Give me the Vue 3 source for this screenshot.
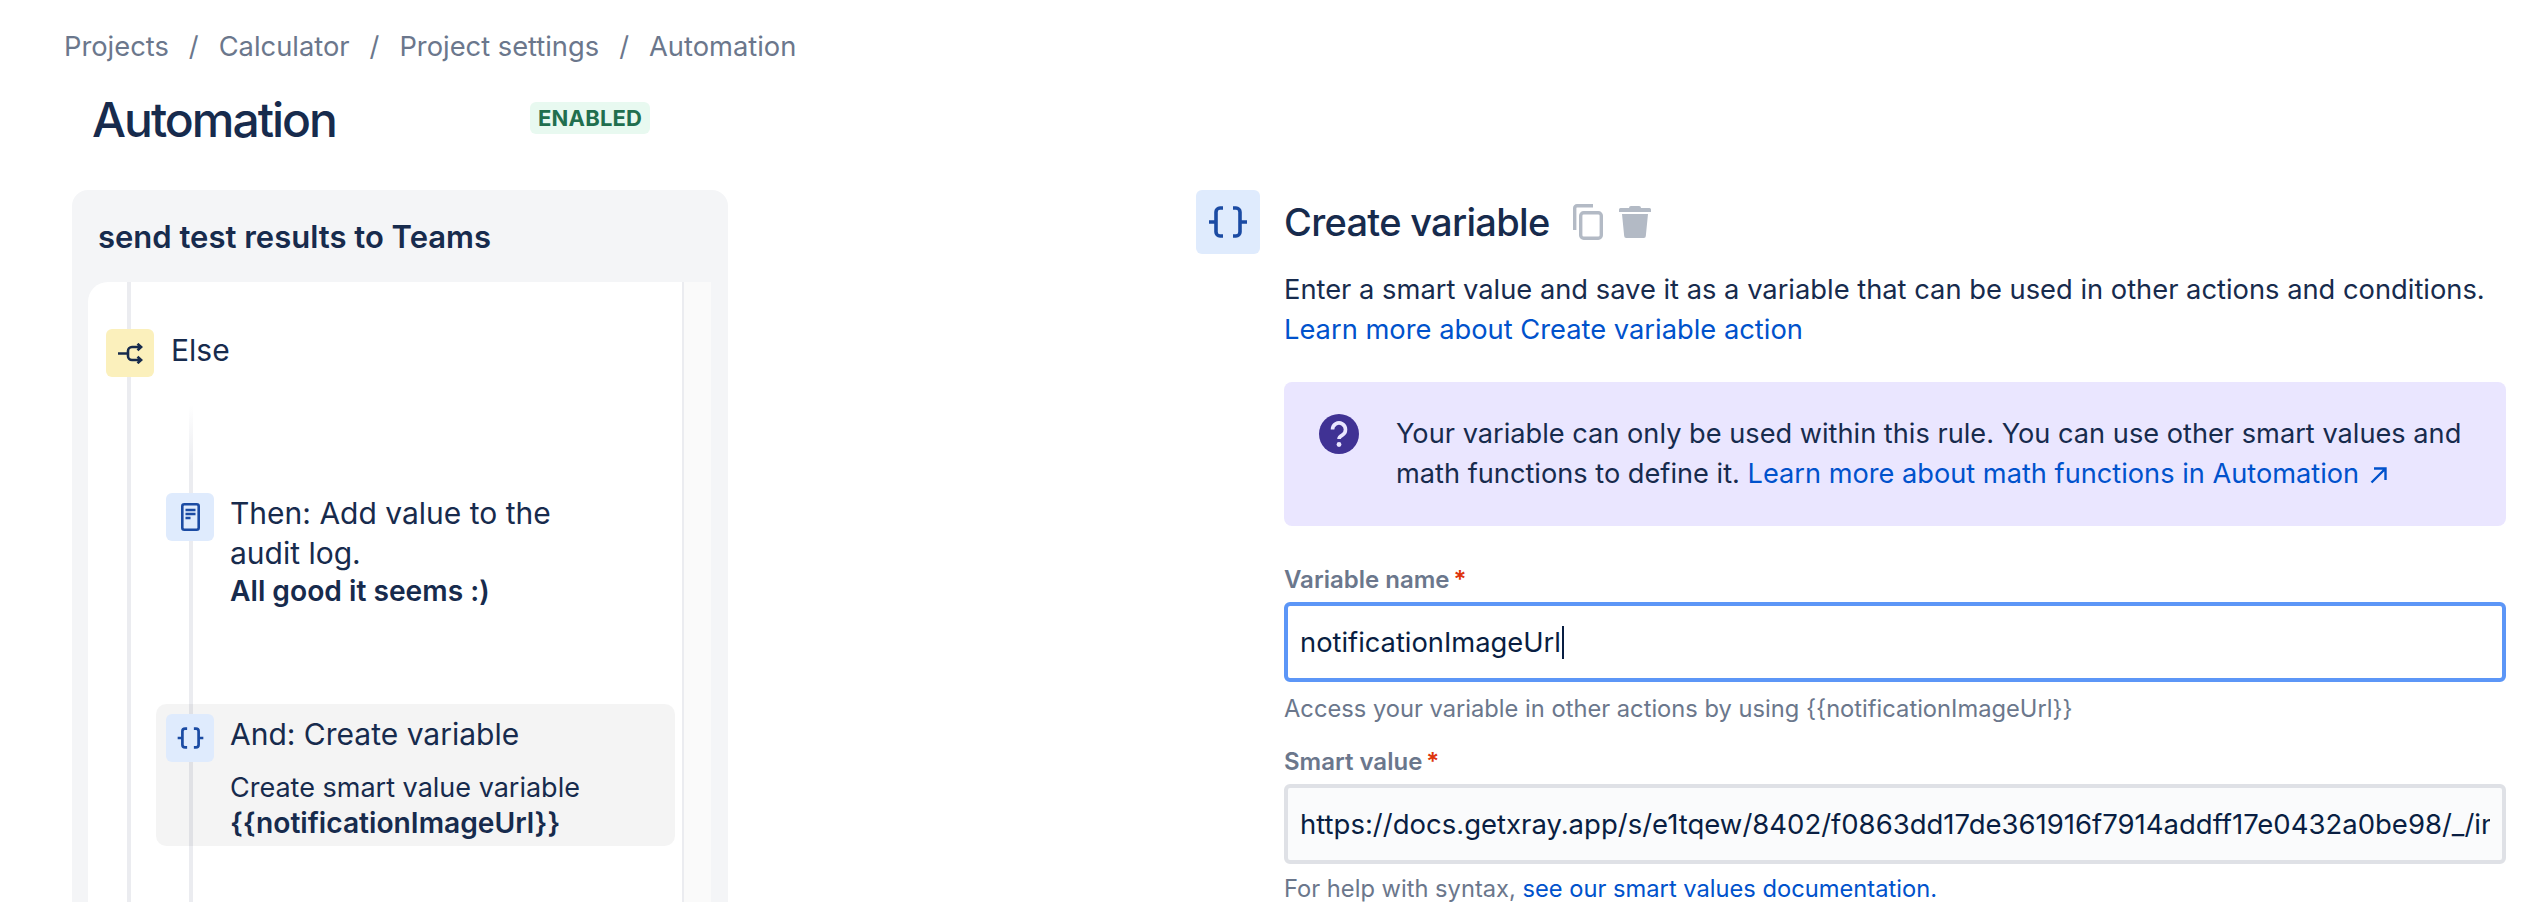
<script setup>
const crumbs = ['Projects', 'Calculator', 'Project settings', 'Automation']
</script>

<template>
  <div class="page">
    <div class="left">
      <nav class="crumbs">
        <template v-for="(c, i) in crumbs" :key="c">
          <span v-if="i > 0" class="sep">/</span>
          <span>{{ c }}</span>
        </template>
      </nav>
      <div class="heading">
        <h1>Automation</h1>
        <span class="lozenge">ENABLED</span>
      </div>
      <div class="rule-panel">
        <h2>send test results to Teams</h2>
        <div class="rule-body">
          <div class="flow">
            <i class="line line-outer"></i>
            <i class="line line-inner"></i>
            <div class="step step-else">
              <span class="tile tile-yellow">
                <svg width="25" height="21" viewBox="0 0 25 21" fill="none" stroke="#172b4d" stroke-width="2.6">
                  <path d="M0 10.500h10M23 4h-9a4 4 0 0 0-4 4v5a4 4 0 0 0 4 4h9" />
                  <path d="M19.500 0.800l3.600 3.200-3.600 3.200M19.500 13.800l3.600 3.200-3.600 3.200" />
                </svg>
              </span>
              <span class="step-title">Else</span>
            </div>
            <div class="step step-then">
              <span class="tile tile-blue">
                <svg width="19" height="28" viewBox="0 0 19 28" fill="none">
                  <rect x="1.300" y="1.300" width="16.400" height="25.400" rx="2" stroke="#1b4ba3" stroke-width="2.600" />
                  <path d="M4.500 7h10M4.500 11h10M4.500 15h5" stroke="#1b4ba3" stroke-width="2.400" />
                </svg>
              </span>
              <div class="step-text">
                <div class="step-title">Then: Add value to the<br />audit log.</div>
                <div class="step-bold">All good it seems :)</div>
              </div>
            </div>
            <div class="step step-and">
              <span class="tile tile-blue">
                <svg width="27" height="22" viewBox="0 0 40 32" fill="none" stroke="#1b4ba3" stroke-width="4">
                  <path d="M15 2h-3a4 4 0 0 0-4 4v20a4 4 0 0 0 4 4h3M1 16h7" />
                  <path d="M25 2h3a4 4 0 0 1 4 4v20a4 4 0 0 1-4 4h-3M32 16h7" />
                </svg>
              </span>
              <div class="step-text">
                <div class="step-title">And: Create variable</div>
                <div class="step-sub">Create smart value variable</div>
                <div class="step-bold">&#123;&#123;notificationImageUrl&#125;&#125;</div>
              </div>
            </div>
          </div>
          <div class="scroll-track"></div>
        </div>
      </div>
    </div>

    <div class="right">
      <span class="tile tile-blue tile-large">
        <svg width="40" height="32" viewBox="0 0 40 32" fill="none" stroke="#1b4ba3" stroke-width="3.600">
          <path d="M15 2h-3a4 4 0 0 0-4 4v20a4 4 0 0 0 4 4h3M1 16h7" />
          <path d="M25 2h3a4 4 0 0 1 4 4v20a4 4 0 0 1-4 4h-3M32 16h7" />
        </svg>
      </span>
      <div class="form">
        <div class="form-head">
          <h2>Create variable</h2>
          <svg class="copy" width="30" height="36" viewBox="0 0 30 36" fill="none" stroke="#b3bac5" stroke-width="3.400">
            <path d="M20 1.700H4a2.300 2.300 0 0 0-2.300 2.300v22" />
            <rect x="7.700" y="8.700" width="20.600" height="25.600" rx="3" />
          </svg>
          <svg class="trash" width="32" height="32" viewBox="0 0 32 32" fill="#b3bac5">
            <path d="M12 0h8a2 2 0 0 1 2 2h8.500a1.500 1.500 0 0 1 1.500 1.500V6H0V3.500A1.500 1.500 0 0 1 1.500 2H10a2 2 0 0 1 2-2z" />
            <path d="M3 8h26l-2.200 22a2 2 0 0 1-2 2H7.200a2 2 0 0 1-2-2z" />
          </svg>
        </div>
        <p class="desc">
          Enter a smart value and save it as a variable that can be used in other actions and conditions.<br />
          <a>Learn more about Create variable action</a>
        </p>
        <div class="info">
          <svg width="40" height="40" viewBox="0 0 40 40">
            <circle cx="20" cy="20" r="20" fill="#403294" />
            <path d="M13.500 15.500a6.500 6.500 0 1 1 9.800 5.600c-2.300 1.300-3.300 2-3.300 3.900" fill="none" stroke="#eae6ff" stroke-width="3.600" />
            <circle cx="20" cy="30.500" r="2.400" fill="#eae6ff" />
          </svg>
          <p>
            Your variable can only be used within this rule. You can use other smart values and
            math functions to define it. <a>Learn more about math functions in Automation</a>
            <svg class="external" width="17" height="17" viewBox="0 0 17 17" fill="none" stroke="#0052cc" stroke-width="2.400"><path d="M1.500 15.500L15 2M4 1.500h11.500V13" /></svg>
          </p>
        </div>
        <label class="field-label">Variable name<span class="req">*</span></label>
        <div class="input input-focus">notificationImageUrl<span class="caret"></span></div>
        <div class="help help-first">Access your variable in other actions by using &#123;&#123;notificationImageUrl&#125;&#125;</div>
        <label class="field-label field-second">Smart value<span class="req">*</span></label>
        <div class="input input-url"><span class="clip">https://docs.getxray.app/s/e1tqew/8402/f0863dd17de361916f7914addff17e0432a0be98/_/images/icons/emoticons/check.png</span></div>
        <div class="help help-last">For help with syntax, <a>see our smart values documentation.</a></div>
      </div>
    </div>
  </div>
</template>

<style>
html, body {
  margin: 0;
  background: #fff;
}
</style>

<style scoped>
.page {
  display: flex;
  width: 2522px;
  height: 902px;
  overflow: hidden;
  font-family: Inter, "Liberation Sans", sans-serif;
  color: #172b4d;
  background: #fff;
}

.left {
  width: 1196px;
  flex-shrink: 0;
}

.crumbs {
  display: flex;
  gap: 20px;
  padding: 30px 0 0 64px;
  font-size: 27.3px;
  line-height: 34px;
  color: #6b778c;
}

.heading {
  display: flex;
  align-items: flex-start;
  height: 62px;
  margin: 28px 0 0 92px;
}

h1 {
  margin: 0;
  width: 438px;
  font-size: 48px;
  line-height: 56px;
  font-weight: 500;
  letter-spacing: -2px;
}

.lozenge {
  margin-top: 10px;
  padding: 0 8px;
  height: 32px;
  line-height: 32px;
  border-radius: 6px;
  background: #e8f9f0;
  color: #216e4e;
  font-size: 22px;
  font-weight: 700;
  letter-spacing: 0.2px;
}

.rule-panel {
  margin: 36px 0 0 72px;
  width: 656px;
  height: 760px;
  box-sizing: border-box;
  padding-left: 16px;
  background: #f4f5f7;
  border-radius: 16px;
}

.rule-panel h2 {
  margin: 0;
  padding: 28px 0 0 10px;
  height: 92px;
  box-sizing: border-box;
  font-size: 31px;
  line-height: 38px;
  font-weight: 600;
}

.rule-body {
  display: flex;
  width: 623px;
  height: 640px;
  background: #fff;
  border-top-left-radius: 20px;
  overflow: hidden;
}

.flow {
  position: relative;
  width: 594px;
  flex-shrink: 0;
  border-right: 2px solid #ebecf0;
}

.line {
  position: absolute;
  width: 4px;
  background: #ebecf0;
}

.line-outer {
  left: 39px;
  top: 0;
  bottom: 0;
}

.line-inner {
  left: 101px;
  top: 123px;
  bottom: 0;
  background: linear-gradient(#fff, #ebecf0 60px);
}

.step {
  position: relative;
  display: flex;
}

.step-else {
  padding: 47px 0 0 18px;
  gap: 17px;
}

.step-then {
  margin-top: 116px;
  padding-left: 78px;
  gap: 16px;
}

.step-and {
  margin: 95px 7px 0 68px;
  height: 142px;
  box-sizing: border-box;
  padding: 10px 0 0 10px;
  gap: 16px;
  background: rgba(0, 0, 0, 0.045);
  border-radius: 10px;
}

.tile {
  display: flex;
  align-items: center;
  justify-content: center;
  flex-shrink: 0;
  width: 48px;
  height: 48px;
  border-radius: 6px;
}

.tile-yellow {
  background: #fbf0bc;
}

.tile-blue {
  background: #dfebfd;
}

.tile-large {
  width: 64px;
  height: 64px;
}

.step-title {
  font-size: 30px;
  line-height: 40px;
}

.step-else .step-title {
  line-height: 42px;
}

.step-sub {
  margin-top: 17px;
  font-size: 27px;
  line-height: 34px;
}

.step-bold {
  font-size: 28.2px;
  line-height: 36px;
  font-weight: 600;
}

.scroll-track {
  width: 27px;
  background: #fafafa;
}

.right {
  display: flex;
  align-items: flex-start;
  gap: 25px;
  padding-top: 190px;
}

.form {
  width: 1222px;
  flex-shrink: 0;
  margin-left: -1px;
}

.form-head {
  display: flex;
  align-items: center;
  height: 64px;
}

.form-head h2 {
  margin: 0;
  font-size: 38px;
  line-height: 64px;
  font-weight: 500;
  letter-spacing: -0.7px;
}

.copy {
  margin-left: 23px;
}

.trash {
  margin-left: 16px;
}

.desc {
  margin: 16px 0 0;
  font-size: 27.3px;
  line-height: 40px;
  white-space: nowrap;
}

a {
  color: #0052cc;
}

.info {
  display: flex;
  gap: 37px;
  margin-top: 32px;
  height: 144px;
  box-sizing: border-box;
  padding: 32px 0 0 35px;
  background: #eae6ff;
  border-radius: 8px;
}

.info p {
  margin: 0;
  width: 1080px;
  font-size: 27.2px;
  line-height: 40px;
}

.external {
  margin-left: 11px;
  vertical-align: -1px;
}

.field-label {
  display: block;
  margin-top: 40px;
  font-size: 24px;
  line-height: 28px;
  font-weight: 600;
  color: #6b778c;
}

.field-second {
  margin-top: 23px;
}

.req {
  margin-left: 4px;
  color: #de350b;
}

.input {
  display: flex;
  align-items: center;
  height: 80px;
  margin-top: 8px;
  box-sizing: border-box;
  padding: 0 12px;
  border: 4px solid #dfe1e6;
  border-radius: 6px;
  background: #fafbfc;
  font-size: 27.3px;
  color: #091e42;
}

.input-url {
  font-size: 27.5px;
}

.input-focus {
  border-color: #5c96f7;
  background: #fff;
}

.clip {
  overflow: hidden;
  white-space: nowrap;
}

.caret {
  width: 2px;
  height: 33px;
  margin-left: 1px;
  background: #091e42;
}

.help {
  font-size: 23.7px;
  line-height: 32px;
  color: #6b778c;
}

.help-first {
  margin-top: 11px;
}

.help-last {
  margin-top: 12px;
  line-height: 26px;
}
</style>
